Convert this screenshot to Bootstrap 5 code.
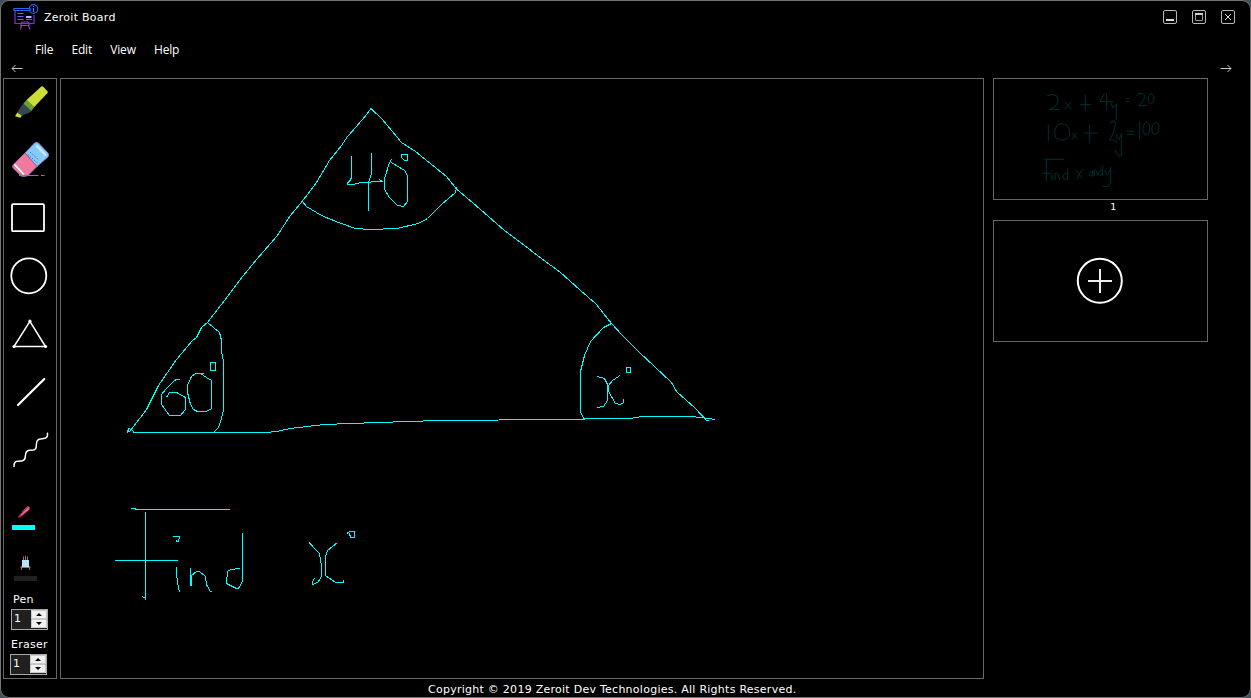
<!DOCTYPE html>
<html lang="en">
<head>
<meta charset="utf-8">
<title>Zeroit Board</title>
<link href="https://cdn.jsdelivr.net/npm/bootstrap@5.3.0/dist/css/bootstrap.min.css" rel="stylesheet">
<style>
html,body{height:100%}
body{background:#46525a;color:#fff;font:11px/14px "DejaVu Sans",Verdana,sans-serif;letter-spacing:.26px;overflow:hidden}
svg{display:block;flex-shrink:0}
.board-window{height:698px;background:#000;border:1px solid #747474;border-radius:9px}
.titlebar{height:33px;padding:0 15px 1px 12px}
.app-title{padding:2px 0 0 5px;line-height:14px}
.win-btn{width:14px;height:14px;padding:0;border:0;background:none}
.menubar{height:26px;padding:6px 0 0 34px;gap:18.3px;font:12px/16px "Open Sans","Noto Sans",sans-serif;letter-spacing:-.2px}
.menubar a{color:#fff}
.pager{height:18px;padding:0 18px 1px 10px}
.workspace{height:601px;padding-left:2px}
.tools{width:54px;border:1px solid #666}
.tools button{padding:0;border:0;background:none;display:block}
.surface{width:924px;margin-left:3px;border:1px solid #666}
.pages{width:215px;margin-left:9px}
.page-thumb{height:122px;border:1px solid #666}
.page-no{height:20px;padding-left:26px;font-size:9.5px;line-height:14px}
.tool-label{height:14px}
.spin{width:37px;height:21px;border:1px solid #a8a8a8;background:#202020;padding-left:2px;line-height:17px}
.ink{fill:none;stroke:#0ff;stroke-width:1;shape-rendering:crispEdges}
.line-art{fill:none;stroke:#fff;stroke-width:1.8;stroke-linecap:round;stroke-linejoin:round}
.foot{height:18px;padding:1px 0 0 427px;line-height:20px}
</style>
</head>
<body>
<div class="board-window d-flex flex-column">
  <header class="titlebar d-flex align-items-center">
    <svg width="26" height="28" viewBox="13 2 26 28" fill="none" stroke-width="1.2">
      <path d="M14 7.500h16v2H14z" stroke="#2868e8"/><path d="M15 10v12.500h19V14" stroke="#7434d8"/>
      <path d="M17.500 12.500h6M17.500 15.500h6M17.500 18.500h6" stroke="#7858ff"/><path d="M26 16h5.500" stroke="#b9b0ff" stroke-width="2"/><path d="M26 18.500h6" stroke="#6848ef"/>
      <path d="M21 25v-3q0-1 1.500-1h5q1.500 0 1.500 1v3M20.500 28.500l1-4h7l1.500 4" stroke="#9b30d8"/>
      <circle cx="33.500" cy="8" r="4.300" stroke="#1f5ee0"/><path d="M33.500 7v4M33.500 5v1" stroke="#5c7cff"/>
    </svg>
    <span class="app-title">Zeroit Board</span>
    <div class="ms-auto d-flex" style="gap:15px">
      <button class="win-btn" aria-label="Minimize"><svg width="14" height="14" fill="none" stroke="#b8b8b8"><rect x=".5" y=".5" width="13" height="13" rx="1.500"/><path d="M3 10h8" stroke="#ddd" stroke-width="2"/></svg></button>
      <button class="win-btn" aria-label="Maximize"><svg width="14" height="14" fill="none" stroke="#b8b8b8"><rect x=".5" y=".5" width="13" height="13" rx="1.500"/><path d="M3.500 4v6.500h7V4" stroke="#999"/><path d="M3 4h8" stroke="#ccc" stroke-width="2"/></svg></button>
      <button class="win-btn" aria-label="Close"><svg width="14" height="14" fill="none" stroke="#b8b8b8"><rect x=".5" y=".5" width="13" height="13" rx="1.500"/><path d="M4 4l6 6M10 4l-6 6" stroke="#ddd"/></svg></button>
    </div>
  </header>
  <nav class="menubar d-flex align-items-center">
    <a class="text-decoration-none">File</a><a class="text-decoration-none">Edit</a><a class="text-decoration-none">View</a><a class="text-decoration-none">Help</a>
  </nav>
  <div class="pager d-flex justify-content-between align-items-center">
    <svg width="12" height="9" fill="none" stroke="#c4c4c4"><path d="M1 4.500h10.500M4.500 1L1 4.500 4.500 8"/></svg>
    <svg width="12" height="9" fill="none" stroke="#c4c4c4"><path d="M.5 4.500H11M7.500 1L11 4.500 7.500 8"/></svg>
  </div>
  <main class="workspace d-flex">
    <aside class="tools d-flex flex-column">
      <button aria-label="Highlighter"><svg width="52" height="52" viewBox="4 79 52 52">
        <path d="M41.300 86.600q1-.8 2 .2l4.100 4.400q.8 1-.1 2L34 107.300 26.500 100z" fill="#cddc39"/><path d="M26.700 99.800l7.500 7.500-3 4-8-7.500z" fill="#689f38"/><path d="M23.300 103.800l8 7.500-2.500 1.700-4.500 1.500-2.600 1.700-4.400-3.600 3-5z" fill="#37474f"/><path d="M17.300 112.600l4.500 3.100-1.500 2-5.300-1.500z" fill="#cddc39"/></svg></button>
      <button aria-label="Eraser"><svg width="52" height="58" viewBox="4 131 52 58">
        <path d="M34.500 143q2-1.500 4 0l9.500 10q1.500 2 0 4L37 166.500 25 153z" fill="#83ccfa" stroke="#8e6aac"/><path d="M25 153l12 13.500-8.500 8.500q-1.500 1.300-3.500 1.300h-3.500L13 168q-1-1.800.4-3.600z" fill="#f07a9c" stroke="#8e6aac"/>
        <path d="M14.500 164.500l9.500 10" stroke="#fff" stroke-width="1.800"/><path d="M36.500 145.500l9.500 10" stroke="#c9e9ff" stroke-width="2.500"/><path d="M27.500 154l10 9M30 152l9 8" stroke="#625dac" stroke-dasharray="1.500 1.500"/><path d="M19 175.500h19.500M41 175.500h3.500" stroke="#9a6cae"/></svg></button>
      <button aria-label="Rectangle"><svg class="line-art" width="52" height="58" viewBox="4 189 52 58"><rect x="12" y="204.200" width="32" height="27" rx="1"/></svg></button>
      <button aria-label="Ellipse"><svg class="line-art" width="52" height="58" viewBox="4 247 52 58"><circle cx="28.800" cy="275.800" r="17.500"/></svg></button>
      <button aria-label="Triangle"><svg class="line-art" width="52" height="58" viewBox="4 305 52 58"><path d="M29.900 321.300L45.500 346.500H14z" stroke-width="1.500"/><g fill="#fff" stroke="none"><circle cx="29.900" cy="321.200" r="1.600"/><circle cx="45.600" cy="346.500" r="1.600"/><circle cx="14" cy="346.500" r="1.600"/></g></svg></button>
      <button aria-label="Line"><svg class="line-art" width="52" height="58" viewBox="4 363 52 58"><path d="M18 405l26.300-26" stroke-width="2.200"/></svg></button>
      <button aria-label="Freehand"><svg class="line-art" width="52" height="58" viewBox="4 421 52 58"><path d="M14 466.500q-.3-5 3.500-5.300l4-.3q3.600-.3 3.800-4.500.3-6 4-6.200l4-.3q3-.3 3-4.500 0-6.200 4-6.500l3.500-.4q4.200-.5 3.700-5.200" stroke-width="1.500"/></svg></button>
      <button aria-label="Pen colour"><svg width="52" height="56" viewBox="4 479 52 56"><path d="M19 515.800l8.500-8.800q1.800-1 2.300.5.2 1.500-1.300 3L20.500 517z" fill="#f06292" stroke="#8b0738" stroke-width=".8"/><path d="M18.200 517.500l2.800-2.500" stroke="#c2185b" stroke-width="1.500"/><path d="M22 512l6-6" stroke="#b06b83" stroke-width=".7"/><path d="M12 525h23v5H12z" fill="#0ff"/></svg></button>
      <button aria-label="Fill colour"><svg width="52" height="56" viewBox="4 535 52 56"><path d="M23.500 561v-4.500M25.500 561v-5M27.500 561v-4.500M22 560.500h7M21.500 566v4M29.500 566v4M20.500 567.500h10" stroke="#a87534"/><path d="M22 560h7v7h-7z" fill="#b9e3f8"/><path d="M14 576h23v5H14z" fill="#202020"/></svg></button>
      <div class="tool-label" style="margin:2px 0 0 9px">Pen</div>
      <div class="spin d-flex" style="margin:2px 0 0 7px"><span>1</span><svg class="ms-auto" width="16" height="19"><use href="#spinner"/></svg></div>
      <div class="tool-label" style="margin:8px 0 0 7px">Eraser</div>
      <div class="spin d-flex" style="margin:2px 0 0 6px"><span>1</span><svg class="ms-auto" width="16" height="19"><g id="spinner"><path d="M0 0h16v9H0zM0 10h16v8H0z" fill="#f0f0f0"/><path d="M.5.5h15v8H.5zM.5 9.500h15v8H.5z" fill="none" stroke="#c9c9c9"/><path d="M5 6h6L8 3zM5 12h6l-3 3z" fill="#000"/></g></svg></div>
    </aside>
    <section class="surface">
      <svg class="ink" width="922" height="599" viewBox="61 79 922 599">
        <path d="M371 108.500L365 116.500 352.500 131 347.500 136.500 341.500 145.500 329.500 160.500 316.500 182.500 302.500 201 290 216 277 236 257 259 243 276 228 296 214 314 207.500 322.500 201.500 327.500 196.500 337.500 192.500 340.500 176.500 359.500 158.500 385.500 146.500 409.500 130.500 430.500 127.500 432.500 128.500 428.500 131.500 429.500 134 432.500H266.500L276.500 431.500 290 428.500 324 424.500 378 422.500 438 420.500 560 419.500H583L585 418.500H630L641.500 416.500H691.500L705 418 715.500 419.500"/>
        <path d="M371 108.500L382.500 119.500 401.500 142.500 415.500 151.500 446.500 176.500 456.500 189 476.500 206 505 231 522 243.500 540 257.500 560 272 580 290 596 304 611.500 323.500 621.500 334.500 638.500 351.500 671.500 382.500 676.500 391.500 695.500 408.500 706.500 420.500H708.500"/>
        <path d="M302.500 201.500L306.500 206.500 321.500 215.500 338.500 222.500 355.500 228.500 370.500 229.500 396.500 228.500 418.500 223.500 427.500 218.500 441.500 204.500 455.500 192.500 456.500 187.500M351.500 156V177.500L349.500 181.500 347.500 182.500V184.500H353.500L360.500 182.500 382.500 181.500 379.500 179.500M371.500 153V174L368.500 182V211M391.500 159.500L389.500 162.500 384.500 178.500V189.500L389.500 197.500 397.500 205.500 403.500 206.500 407.500 201.500V175.500L404.500 170.500 391.500 162.500M401 154.500H407.500V160.500H404.500L401.500 157.500V154"/>
        <path d="M207.500 322.500L219.500 332.500 221.500 340.500V351.500L223.500 361.500V409.500L221.500 418.500 218.500 427.500 214 432M179.500 379.500H176L173.500 381.500 165.500 389.500 161.500 394.500V404.500L169.500 415.500H180.500L185.500 409.500V397.500L176.500 392.500H169.500L166.500 397.500M204 373.500H195.500L191.500 376.500 187.500 385.500V392.500L190.500 404.500 193.500 409.500 197.500 411.500H206.500L211.500 408.500V380.500L206.500 377.500 200.500 373.500M210.500 362.500h5v8h-5z"/>
        <path d="M611.500 323.500L603.500 327.500 590.500 341.500 584.500 355.500 580.500 371.500V411.500L584.500 420.500M597 376.500L604.500 378.500 607.500 384.500V400.500L603.500 406.500 597.500 407.500M620 375.500L612.500 380.500 608.500 385.500V391.500L615.500 403.500 620.500 404.500 623.500 402.500V399M626.500 367.500h4v5h-4z"/>
        <path d="M131 508.500H135L136 509.500H230M145.500 512V600M142 596.500L145 598M115 560.500H177.500M173 536.500H179.500L178.500 541.500H176.500V540M176.500 567V573L177.500 582.500 179.500 592.500M190.500 568V586M190.500 585.500H191.500V575.500L196.500 571.500H199.500L205.500 576.500 206.500 584.500 210.500 591.500H212M242.500 533V581.500L238.500 588.500H236.500L226.500 583.500 227.500 571.500 230.500 569.500 240 568.500"/>
        <path d="M309 542.500L319.500 553.500 321.500 565.500V576.500L318.500 581.500 313.500 584.500H312.500V581.500L314.500 578.500M337.500 542.500L327.500 550.500 325.500 556.500V575.500L335.500 582.500H343.500V580M347 533.500L349.500 531.500H354.500V537.500H350.500L349.500 533.500"/>
      </svg>
    </section>
    <aside class="pages">
      <div class="page-thumb">
        <svg width="213" height="120" viewBox="994 79 213 120"><path transform="translate(1030 80) scale(.33333)" fill="none" stroke="#00302f" stroke-width="3" d="M51 48q14-9 28-1 14 20-7 35l-15 7h33M105 65l19 23M124 65l-22 24M149 74h35M166 45v48M223 40l-13 25h40M230 40v52M244 70l4 14 11-11M259 71v45q-4 10-15 7M287 57h12M287 65h12M319 47q10-12 23-4 8 12-16 34h26M363 40q-14 13-5 30 8 5 15-12 0-15-12-18M55 135v48M83 134q-15 20-5 40 22 15 40-5 5-30-15-36-12-5-20 1M127 158l14 19M141 158l-15 20M161 159h42M179 134v54M238 130q10-10 19-2-3 30-18 52 10-2 22 6M260 162q0 18 6 18l9-18M274 160v65q-5 15-19-15M290 154h22M290 163h22M329 125v52M347 127q-15 17-4 35 12 8 17-15 0-22-13-20M374 127q-15 17-4 35 12 8 17-15 0-20-13-20M43 238h59M49 238v66M36 280h27M66 282v19M66 270v3M75 300v-20q10-7 14 20M113 264v35M112 281q-15-2-13 13 4 9 15-1M139 270l18 26M157 268l-18 30M188 272q-15 8-8 16 8-2 9-16v18M193 288v-17q8-7 9 16M218 258v30M218 271q-13 0-12 12 6 8 12-5M225 270q2 17 8 14l9-20M242 262v48q-6 14-26 8M252 277h3"/></svg>
      </div>
      <div class="page-no text-center">1</div>
      <div class="page-thumb">
        <svg width="213" height="120" viewBox="994 221 213 120" fill="none" stroke="#fff" stroke-width="2"><circle cx="1099.800" cy="280.800" r="22"/><path d="M1088 281h24M1100 269v24" stroke="#eee"/></svg>
      </div>
    </aside>
  </main>
  <footer class="foot">Copyright © 2019 Zeroit Dev Technologies. All Rights Reserved.</footer>
</div>
<script src="https://cdn.jsdelivr.net/npm/bootstrap@5.3.0/dist/js/bootstrap.bundle.min.js"></script>
</body>
</html>
